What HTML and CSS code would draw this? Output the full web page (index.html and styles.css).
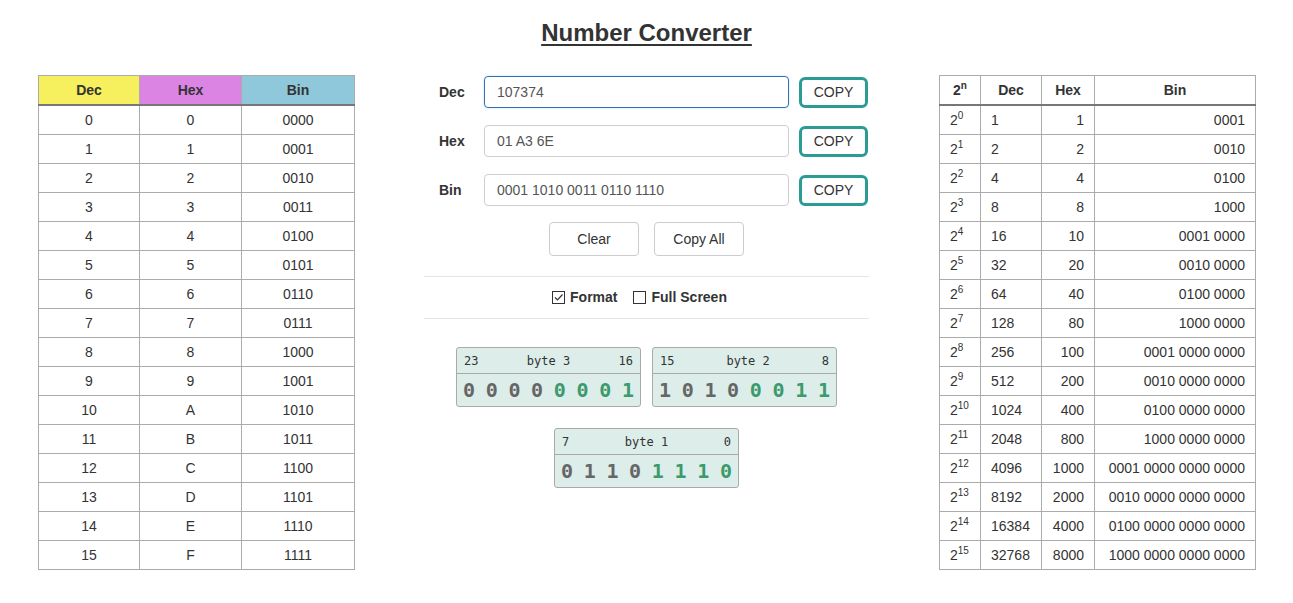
FILE: index.html
```html
<!DOCTYPE html>
<html>
<head>
<meta charset="utf-8">
<link rel="stylesheet" href="styles.css">
</head>
<body>
<h1 class="title">Number Converter</h1>
<div class="layout">
  <table class="ref-table">
    <colgroup><col class="c-dec"><col class="c-hex"><col class="c-bin"></colgroup>
    <thead>
      <tr><th class="h-dec">Dec</th><th class="h-hex">Hex</th><th class="h-bin">Bin</th></tr>
    </thead>
    <tbody>
      <tr><td>0</td><td>0</td><td>0000</td></tr>
      <tr><td>1</td><td>1</td><td>0001</td></tr>
      <tr><td>2</td><td>2</td><td>0010</td></tr>
      <tr><td>3</td><td>3</td><td>0011</td></tr>
      <tr><td>4</td><td>4</td><td>0100</td></tr>
      <tr><td>5</td><td>5</td><td>0101</td></tr>
      <tr><td>6</td><td>6</td><td>0110</td></tr>
      <tr><td>7</td><td>7</td><td>0111</td></tr>
      <tr><td>8</td><td>8</td><td>1000</td></tr>
      <tr><td>9</td><td>9</td><td>1001</td></tr>
      <tr><td>10</td><td>A</td><td>1010</td></tr>
      <tr><td>11</td><td>B</td><td>1011</td></tr>
      <tr><td>12</td><td>C</td><td>1100</td></tr>
      <tr><td>13</td><td>D</td><td>1101</td></tr>
      <tr><td>14</td><td>E</td><td>1110</td></tr>
      <tr><td>15</td><td>F</td><td>1111</td></tr>
    </tbody>
  </table>

  <div class="converter">
    <div class="form-row">
      <label class="lbl">Dec</label>
      <div class="input focused">107374</div>
      <button class="copy">COPY</button>
    </div>
    <div class="form-row">
      <label class="lbl">Hex</label>
      <div class="input">01 A3 6E</div>
      <button class="copy">COPY</button>
    </div>
    <div class="form-row">
      <label class="lbl">Bin</label>
      <div class="input">0001 1010 0011 0110 1110</div>
      <button class="copy">COPY</button>
    </div>
    <div class="actions">
      <button class="btn">Clear</button>
      <button class="btn">Copy All</button>
    </div>
    <hr class="sep">
    <div class="options">
      <span class="opt"><span class="cb"><svg viewBox="0 0 11 11" width="11" height="11"><path d="M2 5.5 L4.5 8 L9.5 2.5" fill="none" stroke="#333" stroke-width="1.2"/></svg></span>Format</span>
      <span class="opt"><span class="cb"></span>Full Screen</span>
    </div>
    <hr class="sep">
    <div class="bytes">
      <div class="byte">
        <div class="byte-head"><span>23</span><span>byte 3</span><span>16</span></div>
        <div class="bits"><span>0</span><span>0</span><span>0</span><span>0</span><span class="g">0</span><span class="g">0</span><span class="g">0</span><span class="g">1</span></div>
      </div>
      <div class="byte">
        <div class="byte-head"><span>15</span><span>byte 2</span><span>8</span></div>
        <div class="bits"><span>1</span><span>0</span><span>1</span><span>0</span><span class="g">0</span><span class="g">0</span><span class="g">1</span><span class="g">1</span></div>
      </div>
      <div class="byte">
        <div class="byte-head"><span>7</span><span>byte 1</span><span>0</span></div>
        <div class="bits"><span>0</span><span>1</span><span>1</span><span>0</span><span class="g">1</span><span class="g">1</span><span class="g">1</span><span class="g">0</span></div>
      </div>
    </div>
  </div>

  <table class="pow-table">
    <colgroup><col class="p-n"><col class="p-dec"><col class="p-hex"><col class="p-bin"></colgroup>
    <thead>
      <tr><th>2<sup>n</sup></th><th>Dec</th><th>Hex</th><th>Bin</th></tr>
    </thead>
    <tbody>
      <tr><td>2<sup>0</sup></td><td>1</td><td class="r">1</td><td class="r">0001</td></tr>
      <tr><td>2<sup>1</sup></td><td>2</td><td class="r">2</td><td class="r">0010</td></tr>
      <tr><td>2<sup>2</sup></td><td>4</td><td class="r">4</td><td class="r">0100</td></tr>
      <tr><td>2<sup>3</sup></td><td>8</td><td class="r">8</td><td class="r">1000</td></tr>
      <tr><td>2<sup>4</sup></td><td>16</td><td class="r">10</td><td class="r">0001 0000</td></tr>
      <tr><td>2<sup>5</sup></td><td>32</td><td class="r">20</td><td class="r">0010 0000</td></tr>
      <tr><td>2<sup>6</sup></td><td>64</td><td class="r">40</td><td class="r">0100 0000</td></tr>
      <tr><td>2<sup>7</sup></td><td>128</td><td class="r">80</td><td class="r">1000 0000</td></tr>
      <tr><td>2<sup>8</sup></td><td>256</td><td class="r">100</td><td class="r">0001 0000 0000</td></tr>
      <tr><td>2<sup>9</sup></td><td>512</td><td class="r">200</td><td class="r">0010 0000 0000</td></tr>
      <tr><td>2<sup>10</sup></td><td>1024</td><td class="r">400</td><td class="r">0100 0000 0000</td></tr>
      <tr><td>2<sup>11</sup></td><td>2048</td><td class="r">800</td><td class="r">1000 0000 0000</td></tr>
      <tr><td>2<sup>12</sup></td><td>4096</td><td class="r">1000</td><td class="r">0001 0000 0000 0000</td></tr>
      <tr><td>2<sup>13</sup></td><td>8192</td><td class="r">2000</td><td class="r">0010 0000 0000 0000</td></tr>
      <tr><td>2<sup>14</sup></td><td>16384</td><td class="r">4000</td><td class="r">0100 0000 0000 0000</td></tr>
      <tr><td>2<sup>15</sup></td><td>32768</td><td class="r">8000</td><td class="r">1000 0000 0000 0000</td></tr>
    </tbody>
  </table>
</div>
</body>
</html>
```
FILE: styles.css
```css
* { box-sizing: border-box; }
html, body { margin: 0; padding: 0; background: #fff; }
body {
  font-family: "Liberation Sans", Arial, sans-serif;
  font-size: 14px;
  color: #333;
  line-height: 20px;
}
.title {
  margin: 0;
  padding-top: 19px;
  height: 75px;
  text-align: center;
  font-size: 24px;
  line-height: 28px;
  font-weight: bold;
  text-decoration: underline;
  text-decoration-thickness: 2px;
  text-underline-offset: 3px;
}
.layout {
  display: flex;
  justify-content: center;
  align-items: flex-start;
  gap: 70px;
}
table {
  border-collapse: collapse;
  table-layout: fixed;
}
th, td {
  border: 1px solid #ababab;
  padding: 4px 10px;
  height: 29px;
  line-height: 20px;
  white-space: nowrap;
}
th {
  font-weight: bold;
  border-bottom: 2px solid #777;
  text-align: center;
  height: 29px;
  padding: 4px 10px 3px;
}
.ref-table {
  width: 316px;
  margin-left: 1px;
  margin-right: -1px;
}
.ref-table td { text-align: center; }
.c-dec { width: 101px; }
.c-hex { width: 102px; }
.c-bin { width: 113px; }
.h-dec { background: #f6ef5e; }
.h-hex { background: #dc84e4; }
.h-bin { background: #8ec8da; }

.pow-table { width: 316px; }
.p-n { width: 41px; }
.p-dec { width: 61px; }
.p-hex { width: 53px; }
.p-bin { width: 161px; }
.pow-table td.r { text-align: right; }
sup {
  font-size: 10px;
  line-height: 0;
  vertical-align: 6px;
}

.converter {
  width: 445px;
  padding-top: 1px;
}
.form-row {
  display: grid;
  grid-template-columns: 60px 305px 79px;
  align-items: center;
  height: 32px;
  margin-bottom: 17px;
}
.lbl {
  font-weight: bold;
  padding-left: 15px;
}
.input {
  height: 32px;
  border: 1px solid #cfcfcf;
  border-radius: 4px;
  padding: 5px 12px;
  color: #555;
  line-height: 20px;
}
.input.focused {
  border-color: #3470ae;
  box-shadow: 0 0 2px rgba(102, 175, 233, 0.5);
}
.copy {
  height: 31px;
  width: 69px;
  margin-left: 10px;
  border: 3px solid #2b9c95;
  border-radius: 6px;
  background: #fff;
  color: #333;
  font-family: inherit;
  font-size: 14px;
  padding: 0;
}
.actions {
  display: flex;
  justify-content: center;
  gap: 15px;
  margin-top: -1px;
}
.btn {
  width: 90px;
  height: 34px;
  border: 1px solid #ccc;
  border-radius: 4px;
  background: #fff;
  color: #333;
  font-family: inherit;
  font-size: 14px;
  padding: 0;
}
.sep {
  border: 0;
  border-top: 1px solid #e5e5e5;
  margin: 20px 0 0 0;
}
.options {
  display: flex;
  justify-content: center;
  gap: 14px;
  font-weight: bold;
  padding-top: 10px;
  padding-right: 16px;
  height: 41px;
}
.opt {
  display: flex;
  align-items: center;
  gap: 5px;
  height: 20px;
}
.cb {
  width: 13px;
  height: 13px;
  border: 1px solid #333;
  display: flex;
  align-items: center;
  justify-content: center;
  margin-left: 2px;
}
.options + .sep { margin-top: 0; }
.bytes {
  display: flex;
  flex-wrap: wrap;
  justify-content: center;
  column-gap: 11px;
  row-gap: 21px;
  padding: 28px 31px 0;
}
.byte {
  width: 185px;
  background: #dcedea;
  border: 1px solid #aaa;
  border-radius: 3px;
  font-family: "DejaVu Sans Mono", "Liberation Mono", monospace;
}
.byte-head {
  display: flex;
  justify-content: space-between;
  height: 26px;
  padding: 3px 7px 0;
  font-size: 12px;
  line-height: 20px;
  color: #333;
  border-bottom: 1px solid #aaa;
}
.bits {
  display: flex;
  justify-content: space-between;
  height: 32px;
  padding: 2px 6px 0;
  font-size: 20px;
  font-weight: bold;
  line-height: 28px;
  color: #666;
}
.bits .g { color: #3c9a6c; }
```
